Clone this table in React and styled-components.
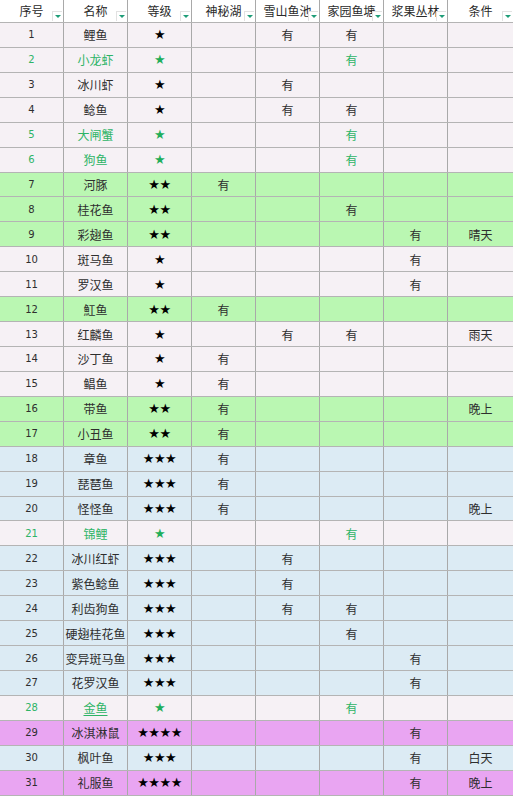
import React from 'react';
import styled, { createGlobalStyle } from 'styled-components';

const GlobalStyle = createGlobalStyle`
  html, body {
    margin: 0;
    padding: 0;
    background: #ffffff;
    overflow: hidden;
  }
  body {
    font-family: "Liberation Sans", "Noto Sans CJK SC", sans-serif;
  }
`;

const COLUMNS = ['序号', '名称', '等级', '神秘湖', '雪山鱼池', '家园鱼塘', '浆果丛林', '条件'];

const TONES = {
  plain: '#f6f1f5',
  green: '#baf7b2',
  blue: '#dcebf4',
  purple: '#e9a5f2',
};

// [no, name, stars, tone, greenText, lake, snow, home, berry, cond]
const FISH = [
  [1, '鲤鱼', 1, 'plain', false, '', '有', '有', '', ''],
  [2, '小龙虾', 1, 'plain', true, '', '', '有', '', ''],
  [3, '冰川虾', 1, 'plain', false, '', '有', '', '', ''],
  [4, '鲶鱼', 1, 'plain', false, '', '有', '有', '', ''],
  [5, '大闸蟹', 1, 'plain', true, '', '', '有', '', ''],
  [6, '狗鱼', 1, 'plain', true, '', '', '有', '', ''],
  [7, '河豚', 2, 'green', false, '有', '', '', '', ''],
  [8, '桂花鱼', 2, 'green', false, '', '', '有', '', ''],
  [9, '彩翅鱼', 2, 'green', false, '', '', '', '有', '晴天'],
  [10, '斑马鱼', 1, 'plain', false, '', '', '', '有', ''],
  [11, '罗汉鱼', 1, 'plain', false, '', '', '', '有', ''],
  [12, '魟鱼', 2, 'green', false, '有', '', '', '', ''],
  [13, '红麟鱼', 1, 'plain', false, '', '有', '有', '', '雨天'],
  [14, '沙丁鱼', 1, 'plain', false, '有', '', '', '', ''],
  [15, '鲳鱼', 1, 'plain', false, '有', '', '', '', ''],
  [16, '带鱼', 2, 'green', false, '有', '', '', '', '晚上'],
  [17, '小丑鱼', 2, 'green', false, '有', '', '', '', ''],
  [18, '章鱼', 3, 'blue', false, '有', '', '', '', ''],
  [19, '琵琶鱼', 3, 'blue', false, '有', '', '', '', ''],
  [20, '怪怪鱼', 3, 'blue', false, '有', '', '', '', '晚上'],
  [21, '锦鲤', 1, 'plain', true, '', '', '有', '', ''],
  [22, '冰川红虾', 3, 'blue', false, '', '有', '', '', ''],
  [23, '紫色鲶鱼', 3, 'blue', false, '', '有', '', '', ''],
  [24, '利齿狗鱼', 3, 'blue', false, '', '有', '有', '', ''],
  [25, '硬翅桂花鱼', 3, 'blue', false, '', '', '有', '', ''],
  [26, '变异斑马鱼', 3, 'blue', false, '', '', '', '有', ''],
  [27, '花罗汉鱼', 3, 'blue', false, '', '', '', '有', ''],
  [28, '金鱼', 1, 'plain', true, '', '', '有', '', ''],
  [29, '冰淇淋鼠', 4, 'purple', false, '', '', '', '有', ''],
  [30, '枫叶鱼', 3, 'blue', false, '', '', '', '有', '白天'],
  [31, '礼服鱼', 4, 'purple', false, '', '', '', '有', '晚上'],
];

// --- Styled Components ---

const Table = styled.div`
  width: 513px;
  display: flex;
  flex-direction: column;
  color: #2a2a2a;
`;

const Row = styled.div`
  display: grid;
  grid-template-columns: repeat(7, 64px) 1fr;
  height: ${(props) => (props.$head ? '22px' : '23.93px')};
  background-color: ${(props) => (props.$head ? '#ffffff' : TONES[props.$tone])};
  border-bottom: 1px solid #b4b4b4;
`;

const HeadCell = styled.div`
  position: relative;
  display: flex;
  align-items: center;
  justify-content: center;
  border-right: 1px solid #a9a9a9;
  font-family: "Noto Sans CJK SC", sans-serif;
  font-size: 12px;
  color: #2a2a2a;
  padding-bottom: 2px;

  &:last-child {
    border-right: none;
  }
`;

const FilterButton = styled.span`
  position: absolute;
  right: 1px;
  bottom: 1px;
  width: 9px;
  height: 9px;
  background: #ffffff;
  border-top: 1px solid #e2e2e2;
  border-left: 1px solid #e2e2e2;
  display: flex;
  align-items: center;
  justify-content: center;

  &::after {
    content: '';
    width: 0;
    height: 0;
    border-left: 3px solid transparent;
    border-right: 3px solid transparent;
    border-top: 3px solid #1f9d78;
  }
`;

const Cell = styled.div`
  display: flex;
  align-items: center;
  justify-content: center;
  border-right: 1px solid #a9a9a9;
  font-family: ${(props) =>
    props.$num ? '"DejaVu Sans", "Liberation Sans", sans-serif' : '"Noto Sans CJK SC", sans-serif'};
  font-size: ${(props) => (props.$num ? '10px' : '12px')};
  color: ${(props) => (props.$green ? '#2db466' : '#2e2e2e')};
  text-decoration: ${(props) => (props.$link ? 'underline' : 'none')};
  text-underline-offset: 2px;
  white-space: nowrap;

  &:last-child {
    border-right: none;
  }
`;

const Stars = styled.span`
  font-family: "DejaVu Sans", sans-serif;
  font-size: 13px;
  letter-spacing: -0.5px;
  color: ${(props) => (props.$green ? '#1fae5a' : '#000000')};
`;

// --- Component ---

const App = () => (
  <>
    <GlobalStyle />
    <Table>
      <Row $head>
        {COLUMNS.map((title) => (
          <HeadCell key={title}>
            {title}
            <FilterButton />
          </HeadCell>
        ))}
      </Row>

      {FISH.map(([no, name, stars, tone, green, ...spots]) => (
        <Row key={no} $tone={tone}>
          <Cell $num $green={green}>{no}</Cell>
          <Cell $green={green} $link={no === 28}>{name}</Cell>
          <Cell>
            <Stars $green={green}>{'★'.repeat(stars)}</Stars>
          </Cell>
          {spots.map((value, i) => (
            <Cell key={i} $green={green}>{value}</Cell>
          ))}
        </Row>
      ))}
    </Table>
  </>
);

export default App;
